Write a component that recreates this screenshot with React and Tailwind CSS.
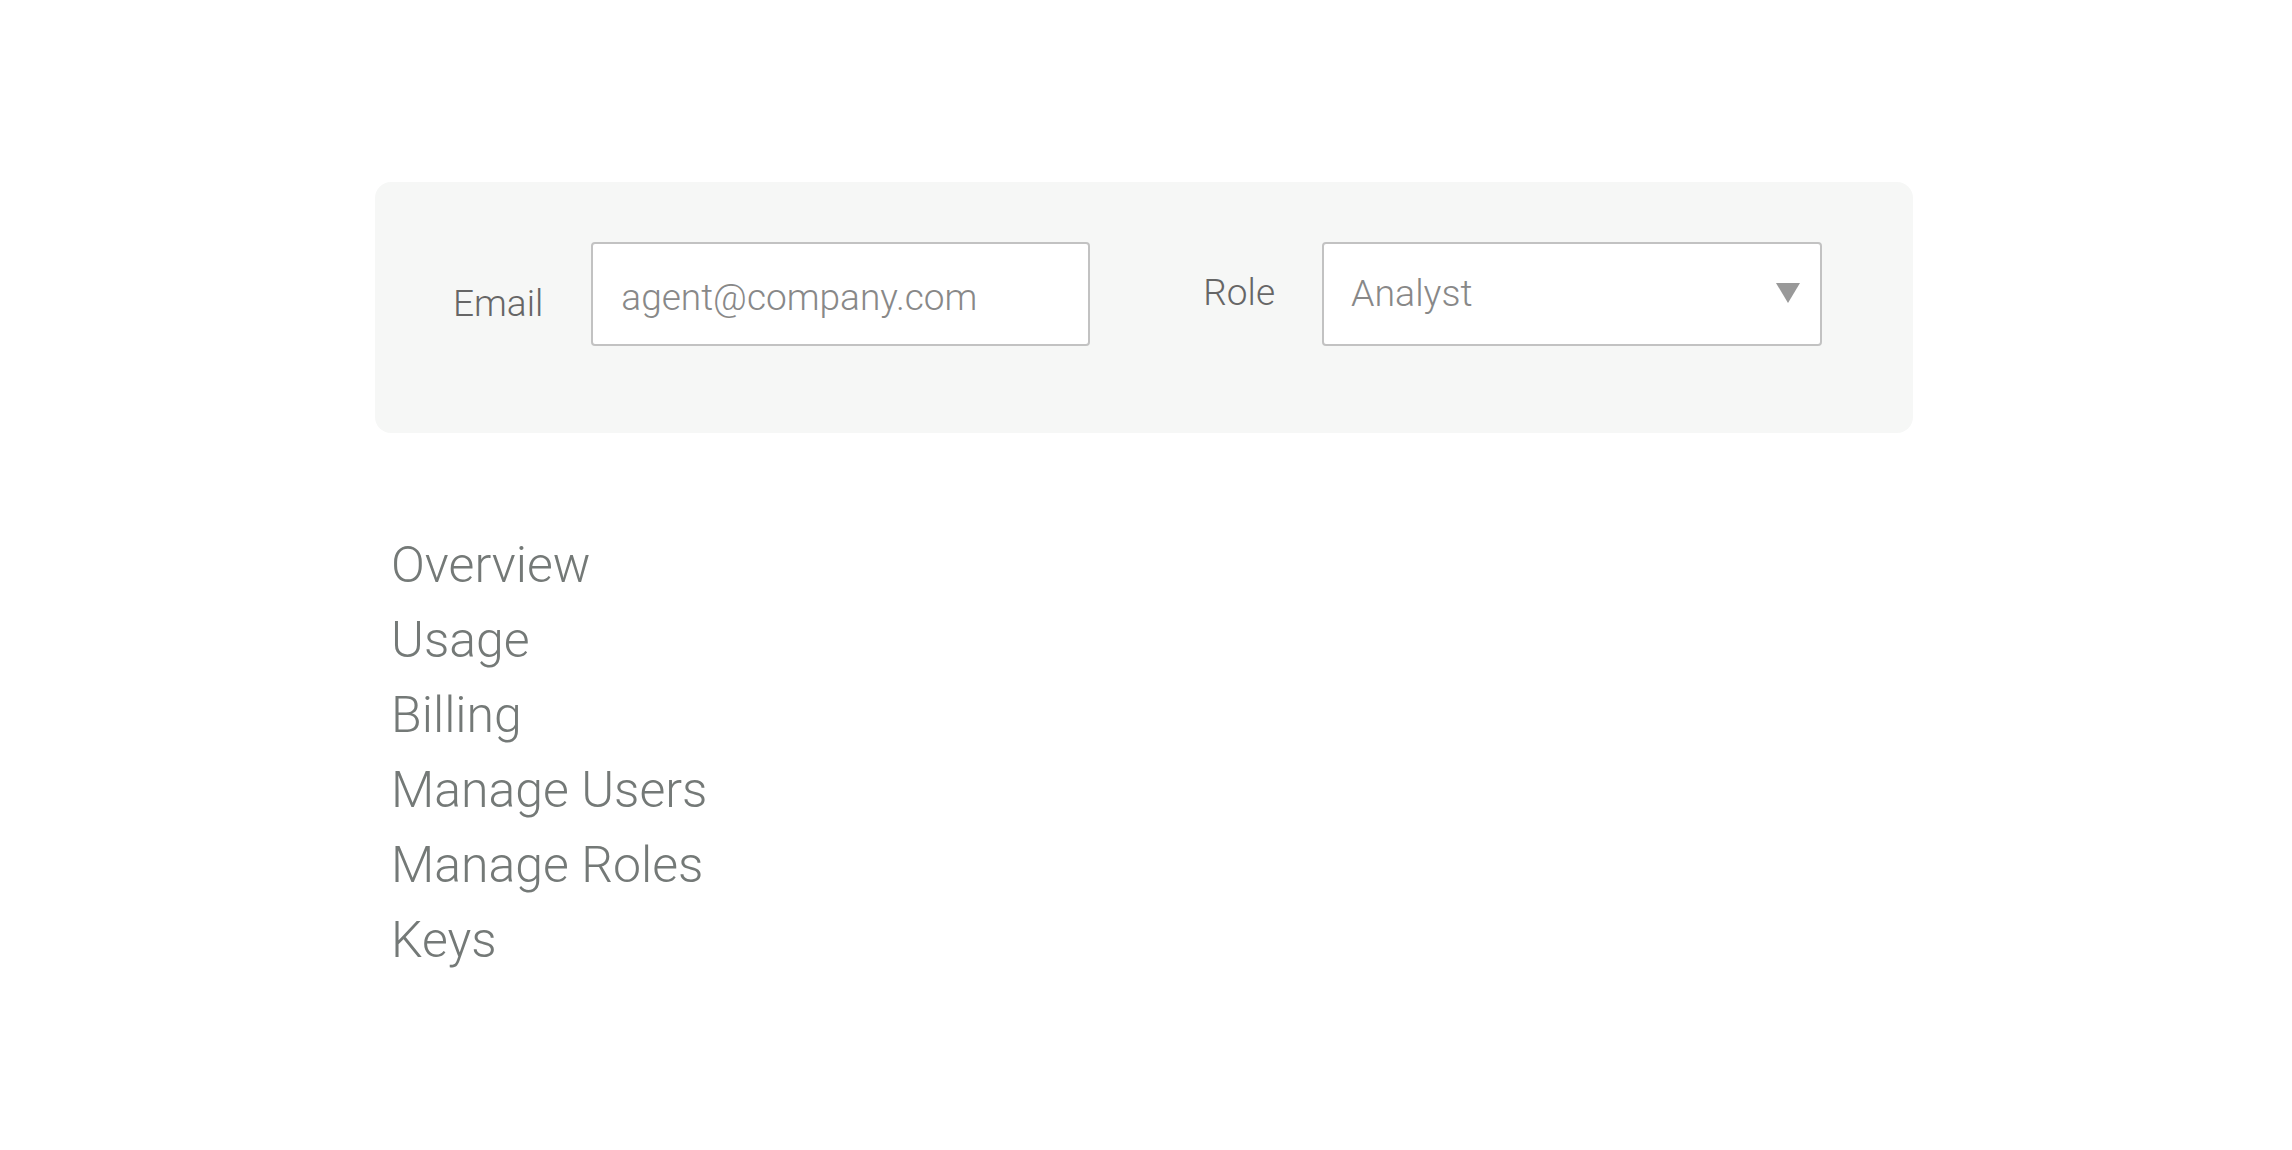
export default function App() {
  const nav = ["Overview", "Usage", "Billing", "Manage Users", "Manage Roles", "Keys"];
  return (
    <div className="min-h-[1150px] w-full bg-white pt-[182px] font-['Roboto',_'Liberation_Sans',_sans-serif]">
      <div className="ml-[375px] w-[1538px]">
        <div className="flex items-start rounded-2xl bg-[#f6f7f6] pt-[60px] pb-[87px] pl-[78px]">
          <label className="mt-[41px] text-[37px] leading-[42px] font-light text-[#666666]">Email</label>
          <input
            type="text"
            placeholder="agent@company.com"
            className="ml-[48px] h-[104px] w-[499px] rounded-[4px] border-2 border-[#c2c2c2] bg-white pl-[28px] pt-[6px] text-[37px] font-light text-[#777] outline-none placeholder:text-[#888888]"
          />
          <label className="ml-[113px] mt-[30px] text-[37px] leading-[42px] font-light text-[#666666]">Role</label>
          <div className="ml-[47px] flex h-[104px] w-[500px] items-center justify-between rounded-[4px] border-2 border-[#c2c2c2] bg-white pl-[27px] pr-[20px]">
            <span className="pb-[3px] text-[37.5px] leading-[42px] font-light text-[#888888]">Analyst</span>
            <svg width="24" height="20" viewBox="0 0 24 20" className="mb-[2px]">
              <polygon points="0,0 24,0 12,20" fill="#999999" />
            </svg>
          </div>
        </div>
        <nav className="mt-[95px] flex flex-col pl-[16px]">
          {nav.map((n) => (
            <a key={n} className="text-[50px] leading-[75px] font-light text-[#747977]">
              {n}
            </a>
          ))}
        </nav>
      </div>
    </div>
  );
}
